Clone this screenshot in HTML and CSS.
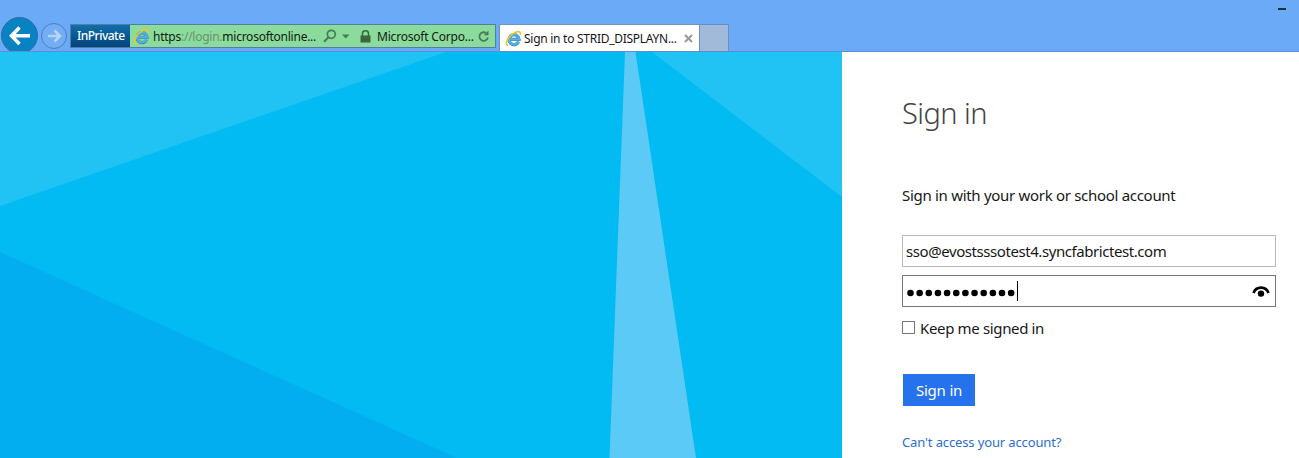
FILE: index.html
```html
<!DOCTYPE html>
<html lang="en">
<head>
<meta charset="utf-8">
<title>Sign in</title>
<link rel="stylesheet" href="styles.css">
</head>
<body>
<svg class="defs" width="0" height="0" aria-hidden="true">
  <symbol id="ie" viewBox="0 0 16 16">
    <path d="M12.800 11A4.700 4.700 0 1 1 13.200 8.800H5" fill="none" stroke="#3486b4" stroke-width="3"/>
    <path d="M12.700 10.900A4.700 4.700 0 1 1 13.200 8.800H5" fill="none" stroke="#52b3e3" stroke-width="2.200"/>
    <path d="M3 14.600C-.4 13.600 2 7.200 7.400 3.600C11.600 .8 15.600 .6 14.200 4.600" fill="none" stroke="#efc52b" stroke-width="1.500"/>
  </symbol>
</svg>
<header class="chrome">
  <div class="window-row"><span class="minimize"></span></div>
  <div class="toolbar">
    <button class="back" aria-label="Back"><svg width="22" height="20" viewBox="0 0 22 20"><path d="M10.500 1.500L2.500 9.700L10.500 18M2.500 9.700H21" fill="none" stroke="#fff" stroke-width="3.500"/></svg></button>
    <button class="forward" aria-label="Forward"><svg width="15" height="14" viewBox="0 0 15 14"><path d="M7.500 1.500L13 7L7.500 12.500M1 7H13" fill="none" stroke="#b5d4fa" stroke-width="2.500"/></svg></button>
    <div class="address">
      <span class="inprivate">InPrivate</span>
      <svg class="ie" width="17" height="17"><use href="#ie"/></svg>
      <span class="url">https<i>://login.</i>microsoftonline...</span>
      <svg class="search" width="14" height="14" viewBox="0 0 14 14"><circle cx="8.300" cy="5.300" r="4" fill="none" stroke="#467d56" stroke-width="1.700"/><path d="M5.500 8.200L1 12.700" stroke="#467d56" stroke-width="2"/></svg>
      <svg class="caret" width="8" height="5" viewBox="0 0 8 5"><path d="M0 .5H7.500L3.700 4.500Z" fill="#467d56"/></svg>
      <svg class="lock" width="11" height="13" viewBox="0 0 11 13"><path d="M2.500 6V3.500a3 2.700 0 0 1 6 0V6" fill="none" stroke="#39683f" stroke-width="1.500"/><rect x=".5" y="5.500" width="10" height="7" fill="#39683f"/></svg>
      <span class="cert">Microsoft Corpo...</span>
      <svg class="reload" width="12" height="13" viewBox="0 0 12 13"><path d="M8 2.900A4.300 4.300 0 1 0 9.900 7.500" fill="none" stroke="#467d56" stroke-width="1.800"/><path d="M10.500 .5V5.300H5.800Z" fill="#467d56"/></svg>
    </div>
    <div class="tab">
      <svg class="ie" width="17" height="17"><use href="#ie"/></svg>
      <span class="tab-title">Sign in to STRID_DISPLAYN...</span>
      <svg class="close" width="9" height="9" viewBox="0 0 9 9"><path d="M1 1L8 8M8 1L1 8" stroke="#999" stroke-width="2"/></svg>
    </div>
    <div class="new-tab"></div>
  </div>
</header>
<main class="page">
  <svg class="artwork" width="842" height="406" viewBox="0 52 842 406" aria-hidden="true">
    <rect y="52" width="842" height="406" fill="#02bbf3"/>
    <path d="M0 52H446L0 206Z" fill="#21c3f4"/>
    <path d="M652 52H842V197Z" fill="#21c3f4"/>
    <path d="M0 252L457 458H0Z" fill="#02aef0"/>
    <path d="M625 52H635.500L696 458H609.500Z" fill="#5ccaf6"/>
  </svg>
  <form class="panel">
    <h1><span>Sign in</span></h1>
    <p class="lead"><span>Sign in with your work or school account</span></p>
    <div class="field"><span class="email">sso@evostsssotest4.syncfabrictest.com</span></div>
    <div class="field focused">
      <svg class="dots" width="110" height="8" viewBox="0 0 110 8"><path d="M3.500 4H105" stroke="#000" stroke-width="6.600" stroke-linecap="round" stroke-dasharray="0 9.150"/></svg>
      <span class="cursor"></span>
      <svg class="reveal" width="18" height="13" viewBox="0 0 18 13"><path d="M1.500 8C4 .8 14 .8 16.500 8" fill="none" stroke="#000" stroke-width="2.600"/><circle cx="9" cy="8.600" r="3.200"/></svg>
    </div>
    <label class="keep"><span class="box"></span><span class="keep-text">Keep me signed in</span></label>
    <button class="submit" type="button"><span>Sign in</span></button>
    <a class="help"><span>Can't access your account?</span></a>
  </form>
</main>
</body>
</html>
```

FILE: styles.css
```css
* { box-sizing: border-box; }
body {
  margin: 0;
  width: 1299px;
  height: 458px;
  overflow: hidden;
  background: #fff;
  color: #171717;
  font-family: "Noto Sans", "Open Sans", sans-serif;
}
svg { display: block; flex: none; }
.defs { position: absolute; }
span { white-space: nowrap; }
button { font-family: inherit; padding: 0; border: 0; flex: none; }

.chrome {
  height: 52px;
  background: #6baaf7;
  border-bottom: 1px solid #5b8fd2;
  overflow: hidden;
}
.window-row {
  height: 17px;
  display: flex;
  justify-content: flex-end;
  padding: 8px 13px 0 0;
}
.minimize { width: 8px; height: 2px; background: #222c3c; }
.toolbar { display: flex; align-items: flex-start; height: 38px; }
.back {
  width: 37px;
  height: 37px;
  margin-left: 1px;
  border: 1px solid #2c6ca8;
  border-radius: 50%;
  background: #0882c0;
  display: flex;
  align-items: center;
  justify-content: center;
}
.forward {
  width: 26px;
  height: 26px;
  margin: 6px 3px 0;
  border: 1px solid #477fc4;
  border-radius: 50%;
  background: #73aef5;
  display: flex;
  align-items: center;
  justify-content: center;
}
.address {
  width: 426px;
  height: 24px;
  margin-top: 7px;
  border: 1px solid #557da3;
  background: #8bdb9d;
  display: flex;
  align-items: center;
  font-size: 12px;
  color: #101c13;
}
.inprivate {
  width: 59px;
  height: 22px;
  line-height: 22px;
  padding-left: 6px;
  letter-spacing: -.5px;
  font-weight: 500;
  background: linear-gradient(#0e6faa, #02437c);
  color: #fff;
  flex: none;
}
.address .ie { margin-left: 3px; }
.url { width: 170px; margin-left: 3px; flex: none; letter-spacing: -.25px; }
.url i { font-style: normal; color: #67936f; }
.search { margin-left: 0; }
.caret { margin-left: 5px; }
.lock { margin-left: 10px; }
.cert { width: 101px; margin-left: 6px; flex: none; letter-spacing: -.2px; }
.reload { margin-left: 0; }
.tab {
  width: 201px;
  height: 27px;
  margin: 7px 0 0 3px;
  border: 1px solid #6d93bf;
  border-bottom: 0;
  background: #fff;
  display: flex;
  align-items: center;
  font-size: 12px;
}
.tab .ie { margin-left: 5px; }
.tab-title { width: 156px; margin-left: 2px; margin-top: 1px; letter-spacing: -.27px; flex: none; }
.close { margin-left: 4px; }
.new-tab {
  width: 29px;
  height: 27px;
  margin-top: 7px;
  border: 1px solid #648fc8;
  border-width: 1px 1px 0 0;
  background: #a2bad9;
}

.page { display: flex; height: 406px; }
.panel { width: 457px; padding: 39px 23px 0 60px; }
h1 {
  margin: 0;
  height: 95px;
  line-height: 44px;
  font-size: 29px;
  font-weight: 300;
  letter-spacing: -.55px;
  color: #444;
}
.lead { margin: 0; height: 49px; font-size: 15px; line-height: 18px; letter-spacing: -.3px; }
.field {
  width: 374px;
  height: 32px;
  margin-bottom: 8px;
  padding-left: 3px;
  border: 1px solid #bababa;
  display: flex;
  align-items: center;
  font-size: 15px;
  letter-spacing: -.43px;
}
.focused { padding-left: 4px; border-color: #777; margin-bottom: 10px; }
.dots { margin-top: 4px; }
.cursor { width: 1px; height: 20px; background: #000; }
.reveal { margin-left: auto; margin-right: 5px; }
.keep { height: 22px; display: flex; align-items: center; font-size: 15px; letter-spacing: -.35px; }
.box { width: 13px; height: 13px; margin: -1px 5px 0 0; border: 1px solid #777; }
.submit {
  display: block;
  width: 72px;
  height: 32px;
  margin: 35px 0 0 1px;
  background: #2672ec;
  color: #fff;
  font-size: 15px;
  letter-spacing: -.2px;
  line-height: 32px;
}
.help { display: block; margin-top: 27px; font-size: 13px; line-height: 18px; letter-spacing: -.13px; color: #2a6fce; }
```
